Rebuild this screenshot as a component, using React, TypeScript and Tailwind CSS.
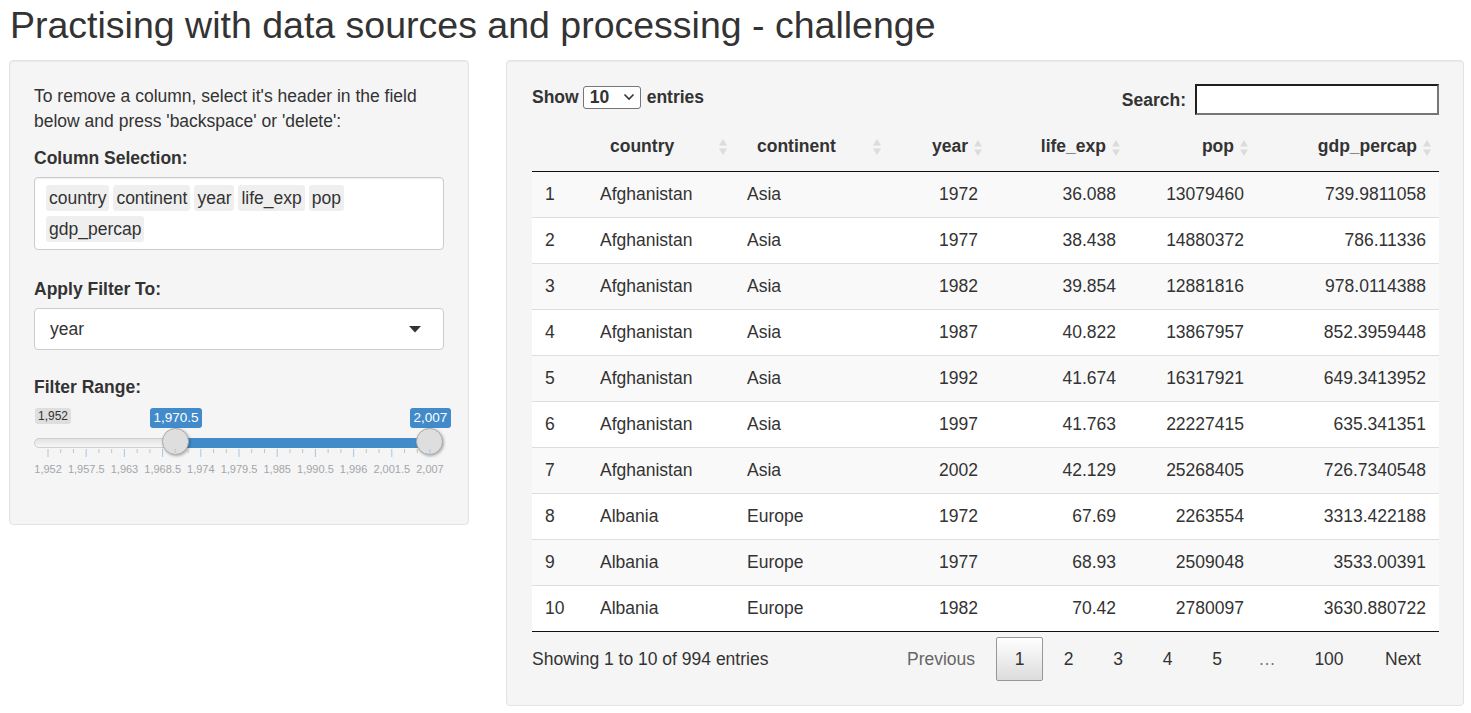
import React from 'react';

interface Row {
  country: string;
  continent: string;
  year: number;
  lifeExp: string;
  pop: string;
  gdp: string;
}

const rows: Row[] = [
  { country: 'Afghanistan', continent: 'Asia', year: 1972, lifeExp: '36.088', pop: '13079460', gdp: '739.9811058' },
  { country: 'Afghanistan', continent: 'Asia', year: 1977, lifeExp: '38.438', pop: '14880372', gdp: '786.11336' },
  { country: 'Afghanistan', continent: 'Asia', year: 1982, lifeExp: '39.854', pop: '12881816', gdp: '978.0114388' },
  { country: 'Afghanistan', continent: 'Asia', year: 1987, lifeExp: '40.822', pop: '13867957', gdp: '852.3959448' },
  { country: 'Afghanistan', continent: 'Asia', year: 1992, lifeExp: '41.674', pop: '16317921', gdp: '649.3413952' },
  { country: 'Afghanistan', continent: 'Asia', year: 1997, lifeExp: '41.763', pop: '22227415', gdp: '635.341351' },
  { country: 'Afghanistan', continent: 'Asia', year: 2002, lifeExp: '42.129', pop: '25268405', gdp: '726.7340548' },
  { country: 'Albania', continent: 'Europe', year: 1972, lifeExp: '67.69', pop: '2263554', gdp: '3313.422188' },
  { country: 'Albania', continent: 'Europe', year: 1977, lifeExp: '68.93', pop: '2509048', gdp: '3533.00391' },
  { country: 'Albania', continent: 'Europe', year: 1982, lifeExp: '70.42', pop: '2780097', gdp: '3630.880722' }
];

const gridCols = 'grid grid-cols-[58px_147px_151px_100px_139px_128px_183px]';

const SortIcon: React.FC = () => (
  <svg width="10" height="18" viewBox="0 0 10 18" className="shrink-0">
    <path d="M5 1 L9 7.5 L1 7.5 Z" fill="#dcdcdc" />
    <path d="M1 10.5 L9 10.5 L5 17 Z" fill="#dcdcdc" />
  </svg>
);

const tags = ['country', 'continent', 'year', 'life_exp', 'pop', 'gdp_percap'];

const gridLabels = ['1,952', '1,957.5', '1,963', '1,968.5', '1,974', '1,979.5', '1,985', '1,990.5', '1,996', '2,001.5', '2,007'];

const RangeSlider: React.FC = () => {
  const x0 = 14;
  const step = 38.2;
  const ticks: React.ReactNode[] = [];
  for (let i = 0; i <= 10; i++) {
    const x = x0 + i * step;
    ticks.push(<line key={`M${i}`} x1={x} x2={x} y1={0} y2={8} stroke="#a9c5e4" strokeWidth={1} />);
    if (i < 10) {
      for (let j = 1; j <= 2; j++) {
        const xm = x + (j * step) / 3;
        ticks.push(<line key={`m${i}-${j}`} x1={xm} x2={xm} y1={0} y2={4} stroke="#c4c4c4" strokeWidth={1} />);
      }
    }
  }

  return (
    <div className="relative h-[82px]">
      <div className="absolute left-[1px] top-[10px] h-[16px] px-[3px] rounded-[3px] bg-[#dedede] text-[12px] leading-[16px] text-[#333]">
        1,952
      </div>
      <div className="absolute left-[116px] top-[10px] h-[20px] w-[52px] rounded-[3px] bg-[#428bca] text-white text-[13.5px] leading-[20px] text-center">
        1,970.5
      </div>
      <div className="absolute left-[376px] top-[10px] h-[20px] w-[41px] rounded-[3px] bg-[#428bca] text-white text-[13.5px] leading-[20px] text-center">
        2,007
      </div>

      <div className="absolute left-0 top-[40px] h-[10px] w-[409px] rounded-full border border-[#cfcfcf] bg-gradient-to-b from-[#e2e2e2] to-[#f7f7f7]" />
      <div className="absolute left-[142px] top-[40px] h-[10px] w-[254px] bg-[#428bca]" />

      <div className="absolute left-[128px] top-[30px] h-[27px] w-[27px] rounded-full border border-[#ababab] bg-[#dedede] shadow-[1px_1px_3px_rgba(0,0,0,0.3)]" />
      <div className="absolute left-[382px] top-[30px] h-[27px] w-[27px] rounded-full border border-[#ababab] bg-[#dedede] shadow-[1px_1px_3px_rgba(0,0,0,0.3)]" />

      <svg className="absolute left-0 top-[51px]" width="412" height="10">
        {ticks}
      </svg>

      <div className="absolute left-[-5px] top-[65px] flex">
        {gridLabels.map((l) => (
          <div key={l} className="flex w-[38.2px] justify-center whitespace-nowrap text-[11px] leading-[12px] text-[#a2a6aa]">
            {l}
          </div>
        ))}
      </div>
    </div>
  );
};

const Sidebar: React.FC = () => (
  <div className="w-[460px] shrink-0 self-start rounded-[4px] border border-[#e3e3e3] bg-[#f5f5f5] px-[24px] pt-[23px] pb-[44px] shadow-[inset_0_1px_1px_rgba(0,0,0,0.05)]">
    <p className="text-[17.5px] leading-[25px]">
      To remove a column, select it's header in the field below and press 'backspace' or 'delete':
    </p>

    <div className="mt-[13px] text-[17.5px] font-bold leading-[22px]">Column Selection:</div>
    <div className="mt-[8px] h-[73px] rounded-[4px] border border-[#cccccc] bg-white pl-[11px] pr-[8px] pt-[7px] shadow-[inset_0_1px_1px_rgba(0,0,0,0.075)]">
      <div className="flex flex-wrap gap-x-[4px] gap-y-[5px]">
        {tags.map((t) => (
          <span key={t} className="h-[26px] rounded-[3px] bg-[#efefef] px-[3px] text-[17.5px] leading-[26px]">
            {t}
          </span>
        ))}
      </div>
    </div>

    <div className="mt-[28px] text-[17.5px] font-bold leading-[22px]">Apply Filter To:</div>
    <div className="mt-[8px] flex h-[42px] items-center justify-between rounded-[4px] border border-[#cccccc] bg-white pl-[15px] pr-[22px]">
      <span className="text-[17.5px]">year</span>
      <svg width="12" height="7" viewBox="0 0 12 7">
        <path d="M0 0 L12 0 L6 6.5 Z" fill="#333" />
      </svg>
    </div>

    <div className="mt-[26px] text-[17.5px] font-bold leading-[22px]">Filter Range:</div>
    <RangeSlider />
  </div>
);

const Pager: React.FC = () => (
  <div className="flex items-center gap-[2px] text-[17.5px]">
    <div className="flex h-[44px] w-[106px] items-center justify-center text-[#666]">Previous</div>
    <div className="flex h-[44px] w-[47px] items-center justify-center rounded-[2px] border border-[#979797] bg-gradient-to-b from-white to-[#dcdcdc] text-[#333]">
      1
    </div>
    <div className="flex h-[44px] w-[47px] items-center justify-center">2</div>
    <div className="flex h-[44px] w-[48px] items-center justify-center">3</div>
    <div className="flex h-[44px] w-[47px] items-center justify-center">4</div>
    <div className="flex h-[44px] w-[48px] items-center justify-center">5</div>
    <div className="flex h-[44px] w-[48px] items-center justify-center text-[#777]">…</div>
    <div className="flex h-[44px] w-[72px] items-center justify-center">100</div>
    <div className="flex h-[44px] w-[72px] items-center justify-center">Next</div>
  </div>
);

const DataPanel: React.FC = () => (
  <div className="w-[958px] shrink-0 rounded-[4px] border border-[#e3e3e3] bg-[#f5f5f5] pl-[25px] pr-[24px] pt-[23px] pb-[24px] shadow-[inset_0_1px_1px_rgba(0,0,0,0.05)]">
    <div className="flex h-[31px] items-start justify-between">
      <div className="flex items-center text-[17.5px] font-bold">
        <span>Show</span>
        <div className="ml-[4px] flex h-[23px] w-[58px] items-center justify-between rounded-[3px] border border-[#767676] bg-white pl-[6px] pr-[5px]">
          <span>10</span>
          <svg width="12" height="8" viewBox="0 0 12 8">
            <path d="M1.5 1.5 L6 6 L10.5 1.5" fill="none" stroke="#333" strokeWidth="1.6" />
          </svg>
        </div>
        <span className="ml-[6px]">entries</span>
      </div>
      <div className="flex h-[31px] items-center text-[17.5px] font-bold">
        <span className="mt-[1px]">Search:</span>
        <div className="ml-[9px] h-[31px] w-[244px] border-2 border-t-[#1f1f1f] border-l-[#1f1f1f] border-r-[#767676] border-b-[#767676] bg-white" />
      </div>
    </div>

    <div className="mt-[13px]">
      <div className={`${gridCols} h-[44px] border-b border-[#111] pb-[6px] text-[17.5px] font-bold`}>
        <div />
        <div className="flex items-center justify-between pl-[20px] pr-[9px]">
          <span>country</span>
          <SortIcon />
        </div>
        <div className="flex items-center justify-between pl-[20px] pr-[6px]">
          <span>continent</span>
          <SortIcon />
        </div>
        {['year', 'life_exp', 'pop', 'gdp_percap'].map((h, i) => (
          <div key={h} className={`flex items-center justify-end ${i === 0 ? 'pr-[5px]' : 'pr-[6px]'}`}>
            <span>{h}</span>
            <span className="ml-[5px] mt-[3px]">
              <SortIcon />
            </span>
          </div>
        ))}
      </div>

      {rows.map((r, i) => (
        <div
          key={i}
          className={`${gridCols} h-[46px] items-center border-b text-[17.5px] ${
            i === rows.length - 1 ? 'border-[#111]' : 'border-[#dddddd]'
          } ${i % 2 === 0 ? 'bg-[#f9f9f9]' : 'bg-white'}`}
        >
          <div className="pl-[13px]">{i + 1}</div>
          <div className="pl-[10px]">{r.country}</div>
          <div className="pl-[10px]">{r.continent}</div>
          <div className="pr-[10px] text-right">{r.year}</div>
          <div className="pr-[11px] text-right">{r.lifeExp}</div>
          <div className="pr-[11px] text-right">{r.pop}</div>
          <div className="pr-[12px] text-right">{r.gdp}</div>
        </div>
      ))}
    </div>

    <div className="mt-[5px] flex items-center justify-between">
      <span className="text-[17.5px]">Showing 1 to 10 of 994 entries</span>
      <Pager />
    </div>
  </div>
);

const App: React.FC = () => {
  return (
    <div className="min-h-screen bg-white font-['Liberation_Sans',Arial,sans-serif] text-[#333]">
      <h2 className="px-[10px] pt-[5px] text-[37.5px] font-normal leading-[40px]">
        Practising with data sources and processing - challenge
      </h2>
      <div className="mt-[15px] flex items-start gap-[37px] pl-[9px]">
        <Sidebar />
        <DataPanel />
      </div>
    </div>
  );
};

export default App;
